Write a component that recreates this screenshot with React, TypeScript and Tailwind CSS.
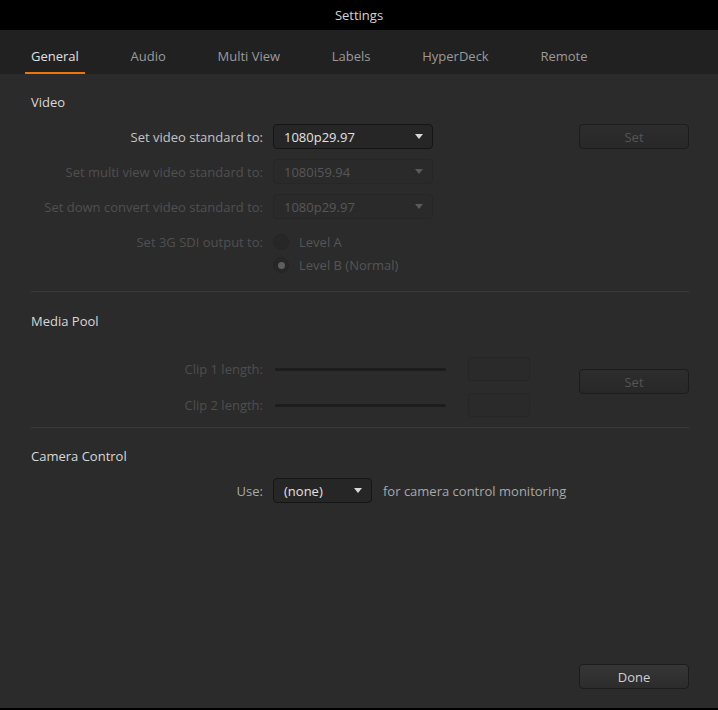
import React from 'react';

const Arrow: React.FC<{ dim?: boolean }> = ({ dim }) => (
  <svg width="8" height="5" viewBox="0 0 8 5" className="shrink-0">
    <path d="M0 0 H8 L4 5 Z" fill={dim ? '#5a5a5a' : '#d8d8d8'} />
  </svg>
);

const Select: React.FC<{ value: string; dim?: boolean; w: string }> = ({ value, dim, w }) => (
  <div
    className={`${w} h-[25px] flex items-center justify-between pl-[10px] pr-[9px] rounded-[4px] border ${
      dim ? 'border-[#262626] bg-[#2a2a2a] text-[#575757]' : 'border-[#151515] bg-[#262626] text-[#e2e2e2]'
    }`}
  >
    <span>{value}</span>
    <Arrow dim={dim} />
  </div>
);

const Button: React.FC<{ label: string; dim?: boolean }> = ({ label, dim }) => (
  <div
    className={`w-[110px] h-[25px] flex items-center justify-center rounded-[4px] border border-[#1c1c1c] bg-gradient-to-b ${
      dim ? 'from-[#2d2d2d] to-[#282828] text-[#555]' : 'from-[#363636] to-[#2c2c2c] text-[#cfcfcf]'
    }`}
  >
    {label}
  </div>
);

const Radio: React.FC<{ checked?: boolean; label: string }> = ({ checked, label }) => (
  <div className="flex items-center h-[20px] ml-[10px]">
    <div className="w-[16px] h-[16px] rounded-full bg-[#272727] border border-[#252525] flex items-center justify-center">
      {checked && <div className="w-[7px] h-[7px] rounded-full bg-[#5e5e5e]" />}
    </div>
    <span className="ml-[10px] text-[#555]">{label}</span>
  </div>
);

const tabs = ['General', 'Audio', 'Multi View', 'Labels', 'HyperDeck', 'Remote'];

export default function App() {
  return (
    <div
      className="w-[718px] h-[710px] flex flex-col bg-[#2b2b2b] text-[13px] leading-[18px] border-b-2 border-black"
      style={{ fontFamily: '"Open Sans", "Noto Sans", sans-serif' }}
    >
      <div className="h-[30px] bg-black flex items-center justify-center text-[#d4d4d4]">Settings</div>

      <div className="h-[44px] bg-[#212121] flex items-start gap-[51.7px] pl-[31px]">
        {tabs.map((t, i) => (
          <div
            key={t}
            className={`relative h-full pt-[17px] ${i === 0 ? 'text-[#e0e0e0]' : 'text-[#9a9a9a]'}`}
          >
            {t}
            {i === 0 && <div className="absolute bottom-0 -left-[6px] -right-[6px] h-[2px] bg-[#ee7410]" />}
          </div>
        ))}
      </div>

      <div className="flex-1 flex flex-col pl-[31px] pr-[29px]">
        {/* Video */}
        <div className="pt-[19px] text-[#d8d8d8]">Video</div>
        <div className="mt-[13px] flex items-center">
          <div className="w-[232px] text-right text-[#c4c4c4]">Set video standard to:</div>
          <div className="ml-[10px]">
            <Select value="1080p29.97" w="w-[160px]" />
          </div>
          <div className="ml-auto">
            <Button label="Set" dim />
          </div>
        </div>
        <div className="mt-[10px] flex items-center">
          <div className="w-[232px] text-right text-[#505050]">Set multi view video standard to:</div>
          <div className="ml-[10px]">
            <Select value="1080i59.94" w="w-[160px]" dim />
          </div>
        </div>
        <div className="mt-[10px] flex items-center">
          <div className="w-[232px] text-right text-[#505050]">Set down convert video standard to:</div>
          <div className="ml-[10px]">
            <Select value="1080p29.97" w="w-[160px]" dim />
          </div>
        </div>
        <div className="mt-[13px] flex">
          <div className="w-[232px] text-right text-[#505050] leading-[20px]">Set 3G SDI output to:</div>
          <div className="flex flex-col gap-[3px]">
            <Radio label="Level A" />
            <Radio label="Level B (Normal)" checked />
          </div>
        </div>
        <div className="mt-[16px] h-px bg-[#3a3a3a]" />

        {/* Media Pool */}
        <div className="pt-[20px] text-[#d8d8d8]">Media Pool</div>
        <div className="mt-[27px] flex">
          <div className="flex flex-col gap-[12px]">
            {['Clip 1 length:', 'Clip 2 length:'].map((l) => (
              <div key={l} className="flex items-center h-[24px]">
                <div className="w-[232px] text-right text-[#4e4e4e]">{l}</div>
                <div className="ml-[12px] w-[171px] h-[3px] rounded-full bg-[#1d1d1d]" />
                <div className="ml-[22px] w-[62px] h-[24px] rounded-[3px] border border-[#262626] bg-[#2a2a2a]" />
              </div>
            ))}
          </div>
          <div className="ml-auto pt-[12px]">
            <Button label="Set" dim />
          </div>
        </div>
        <div className="mt-[10px] h-px bg-[#3a3a3a]" />

        {/* Camera Control */}
        <div className="pt-[19px] text-[#d8d8d8]">Camera Control</div>
        <div className="mt-[13px] flex items-center">
          <div className="w-[232px] text-right text-[#a8a8a8]">Use:</div>
          <div className="ml-[10px]">
            <Select value="(none)" w="w-[99px]" />
          </div>
          <div className="ml-[11px] text-[#a8a8a8]">for camera control monitoring</div>
        </div>

        <div className="mt-auto mb-[19px] flex justify-end">
          <Button label="Done" />
        </div>
      </div>
    </div>
  );
}
